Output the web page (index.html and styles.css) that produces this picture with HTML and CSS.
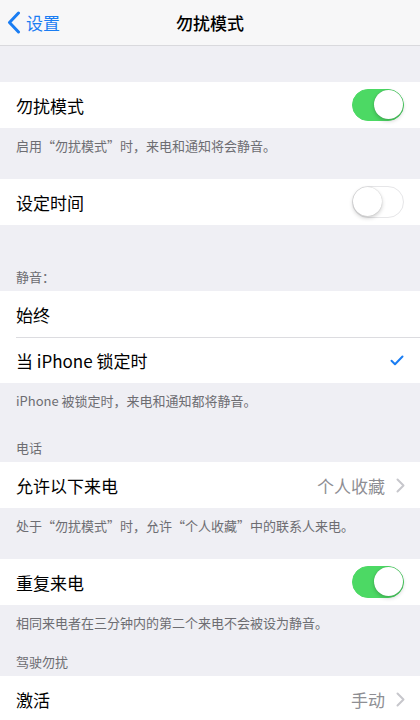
FILE: index.html
```html
<!DOCTYPE html>
<html lang="zh-CN">
<head>
    <meta charset="UTF-8">
    <meta name="viewport" content="width=device-width, initial-scale=1.0">
    <title>勿扰模式</title>
    <link rel="stylesheet" href="styles.css">
</head>
<body>

<div class="navbar">
    <a class="back" href="#">
        <svg width="14" height="23" viewBox="0 0 14 23"><path d="M11.5 2 L2.5 11.5 L11.5 21" fill="none" stroke="currentColor" stroke-width="3" stroke-linecap="round" stroke-linejoin="round"/></svg>
        <span>设置</span>
    </a>
    <h1>勿扰模式</h1>
</div>

<div class="content">
    <section class="section section--first">
        <div class="list">
            <div class="row">
                <span class="label">勿扰模式</span>
                <span class="switch on"><span class="knob"></span></span>
            </div>
        </div>
        <p class="footer">启用“勿扰模式”时，来电和通知将会静音。</p>
    </section>

    <section class="section section--close">
        <div class="list">
            <div class="row">
                <span class="label">设定时间</span>
                <span class="switch"><span class="knob"></span></span>
            </div>
        </div>
    </section>

    <section class="section section--wide">
        <p class="header">静音：</p>
        <div class="list">
            <div class="row">
                <span class="label">始终</span>
            </div>
            <div class="row">
                <span class="label">当 iPhone 锁定时</span>
                <svg class="check" width="14" height="11" viewBox="0 0 14 11"><path d="M1.5 5.8 L5 9.2 L12.5 1.5" fill="none" stroke="#1a7df3" stroke-width="2" stroke-linecap="round" stroke-linejoin="round"/></svg>
            </div>
        </div>
        <p class="footer">iPhone 被锁定时，来电和通知都将静音。</p>
    </section>

    <section class="section section--roomy">
        <p class="header">电话</p>
        <div class="list">
            <div class="row">
                <span class="label">允许以下来电</span>
                <span class="value">个人收藏</span>
                <svg class="chevron" width="9" height="15" viewBox="0 0 9 15"><path d="M1.5 1.5 L7.5 7.5 L1.5 13.5" fill="none" stroke="#c7c7cc" stroke-width="2" stroke-linecap="round" stroke-linejoin="round"/></svg>
            </div>
        </div>
        <p class="footer">处于“勿扰模式”时，允许“个人收藏”中的联系人来电。</p>
    </section>

    <section class="section">
        <div class="list">
            <div class="row">
                <span class="label">重复来电</span>
                <span class="switch on"><span class="knob"></span></span>
            </div>
        </div>
        <p class="footer">相同来电者在三分钟内的第二个来电不会被设为静音。</p>
    </section>

    <section class="section section--tight">
        <p class="header">驾驶勿扰</p>
        <div class="list">
            <div class="row">
                <span class="label">激活</span>
                <span class="value">手动</span>
                <svg class="chevron" width="9" height="15" viewBox="0 0 9 15"><path d="M1.5 1.5 L7.5 7.5 L1.5 13.5" fill="none" stroke="#c7c7cc" stroke-width="2" stroke-linecap="round" stroke-linejoin="round"/></svg>
            </div>
        </div>
    </section>
</div>

</body>
</html>
```

FILE: styles.css
```css
* {
    box-sizing: border-box;
}

body {
    margin: 0;
    background: #efeff4;
    color: #000;
    font-family: "Noto Sans CJK SC", "Noto Sans", sans-serif;
    overflow: hidden;
}

.navbar {
    display: flex;
    align-items: center;
    justify-content: center;
    position: relative;
    height: 46px;
    background: #f7f7f8;
    border-bottom: 1px solid #d9d9dd;
}

.navbar h1 {
    margin: 0;
    font-size: 17px;
    font-weight: 500;
    line-height: 22px;
}

.back {
    position: absolute;
    left: 7px;
    top: 0;
    height: 45px;
    display: flex;
    align-items: center;
    gap: 5px;
    color: #1a7df3;
    text-decoration: none;
    font-size: 17px;
}

.section {
    margin-top: 24px;
}

.section--first {
    margin-top: 36px;
}

.section--close {
    margin-top: 24px;
}

.section--wide {
    margin-top: 42px;
}

.section--roomy {
    margin-top: 28px;
}

.section--tight {
    margin-top: 20px;
}

.list {
    background: #fff;
}

.row {
    display: flex;
    align-items: center;
    height: 46px;
    padding: 0 16px;
    position: relative;
}

.row + .row::before {
    content: "";
    position: absolute;
    top: 0;
    left: 16px;
    right: 0;
    border-top: 1px solid #dcdce0;
}

.label {
    flex: 1;
    font-size: 17px;
}

.value {
    font-size: 17px;
    color: #8e8e93;
    margin-right: 11px;
}

.chevron {
    display: block;
    margin-right: -1px;
}

.check {
    display: block;
}

.header,
.footer {
    margin: 0;
    font-size: 13px;
    line-height: 19px;
    color: #6d6d72;
}

.header {
    padding: 0 16px 5px;
}

.footer {
    padding: 8px 16px 0;
}

.switch {
    position: relative;
    width: 52px;
    height: 32px;
    border-radius: 16px;
    background: #fff;
    border: 1.5px solid #e6e6e8;
}

.switch .knob {
    position: absolute;
    top: 0;
    left: 0;
    width: 29px;
    height: 29px;
    border-radius: 50%;
    background: #fff;
    box-shadow: 0 2px 4px rgba(0, 0, 0, 0.2), 0 0 1px rgba(0, 0, 0, 0.25);
}

.switch.on {
    background: #4cd964;
    border-color: #4cd964;
}

.switch.on .knob {
    left: auto;
    right: 0;
}
```
